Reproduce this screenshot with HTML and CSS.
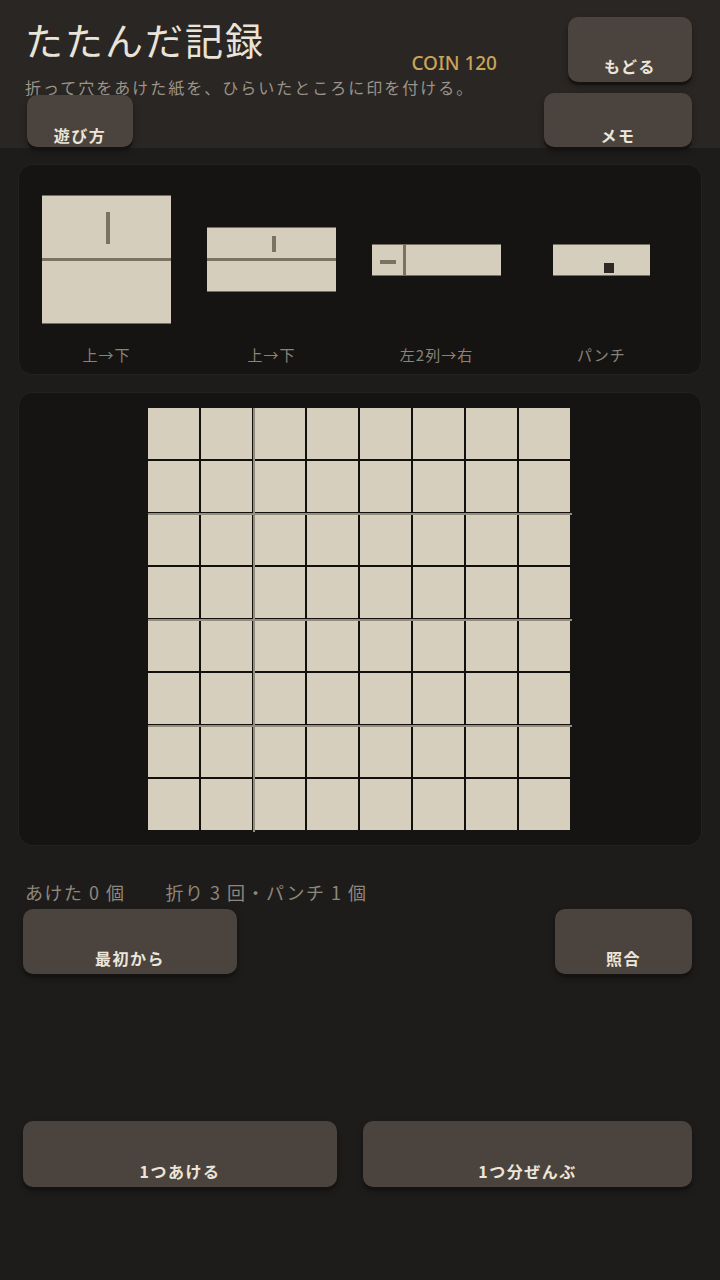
FILE: index.html
```html
<!DOCTYPE html>
<html lang="ja">
  <head>
    <meta charset="UTF-8" />
    <meta name="viewport" content="width=device-width, initial-scale=1.0" />
    <title>たたんだ記録</title>
    <link rel="stylesheet" href="styles.css">
  </head>
  <body>
    <header class="top">
      <div class="top-row">
        <div class="title-block">
          <h1>たたんだ記録</h1>
          <p class="lead">折って穴をあけた紙を、ひらいたところに印を付ける。</p>
        </div>
        <div class="coin">COIN 120</div>
        <button class="btn btn-back">もどる</button>
      </div>
      <div class="tool-row">
        <button class="btn btn-help">遊び方</button>
        <button class="btn btn-memo">メモ</button>
      </div>
    </header>

    <main class="play">
      <!-- fold steps -->
      <section class="panel steps">
        <div class="step">
          <div class="step-fig">
            <div class="paper paper-1">
              <span class="crease crease-h"></span>
              <span class="mark mark-1"></span>
            </div>
          </div>
          <div class="step-label">上→下</div>
        </div>
        <div class="step">
          <div class="step-fig">
            <div class="paper paper-2">
              <span class="crease crease-h"></span>
              <span class="mark mark-2"></span>
            </div>
          </div>
          <div class="step-label">上→下</div>
        </div>
        <div class="step">
          <div class="step-fig">
            <div class="paper paper-3">
              <span class="crease crease-v"></span>
              <span class="mark mark-3"></span>
            </div>
          </div>
          <div class="step-label">左2列→右</div>
        </div>
        <div class="step">
          <div class="step-fig">
            <div class="paper paper-4">
              <span class="hole"></span>
            </div>
          </div>
          <div class="step-label">パンチ</div>
        </div>
      </section>

      <!-- opened sheet -->
      <section class="panel board-panel">
        <div class="board">
          <div class="cell"></div><div class="cell"></div><div class="cell"></div><div class="cell"></div><div class="cell"></div><div class="cell"></div><div class="cell"></div><div class="cell"></div>
          <div class="cell"></div><div class="cell"></div><div class="cell"></div><div class="cell"></div><div class="cell"></div><div class="cell"></div><div class="cell"></div><div class="cell"></div>
          <div class="cell"></div><div class="cell"></div><div class="cell"></div><div class="cell"></div><div class="cell"></div><div class="cell"></div><div class="cell"></div><div class="cell"></div>
          <div class="cell"></div><div class="cell"></div><div class="cell"></div><div class="cell"></div><div class="cell"></div><div class="cell"></div><div class="cell"></div><div class="cell"></div>
          <div class="cell"></div><div class="cell"></div><div class="cell"></div><div class="cell"></div><div class="cell"></div><div class="cell"></div><div class="cell"></div><div class="cell"></div>
          <div class="cell"></div><div class="cell"></div><div class="cell"></div><div class="cell"></div><div class="cell"></div><div class="cell"></div><div class="cell"></div><div class="cell"></div>
          <div class="cell"></div><div class="cell"></div><div class="cell"></div><div class="cell"></div><div class="cell"></div><div class="cell"></div><div class="cell"></div><div class="cell"></div>
          <div class="cell"></div><div class="cell"></div><div class="cell"></div><div class="cell"></div><div class="cell"></div><div class="cell"></div><div class="cell"></div><div class="cell"></div>
          <span class="fold fold-v"></span>
          <span class="fold fold-h fold-h1"></span>
          <span class="fold fold-h fold-h2"></span>
          <span class="fold fold-h fold-h3"></span>
        </div>
      </section>

      <div class="status">
        <span>あけた 0 個</span>
        <span>折り 3 回・パンチ 1 個</span>
      </div>

      <div class="actions">
        <button class="btn btn-reset">最初から</button>
        <button class="btn btn-check">照合</button>
      </div>

      <div class="bottom-actions">
        <button class="btn btn-one">1つあける</button>
        <button class="btn btn-all">1つ分ぜんぶ</button>
      </div>
    </main>
  </body>
</html>
```

FILE: styles.css
```css
* {
  box-sizing: border-box;
  margin: 0;
  padding: 0;
}

body {
  background-color: #1e1c1a;
  color: #e9e3d8;
  font-family: "Noto Sans CJK JP", "Noto Sans", sans-serif;
  min-height: 1280px;
}

/* header */
.top {
  background-color: #2a2623;
  height: 148px;
  padding: 17px 28px 1px 25px;
}

.top-row {
  display: flex;
  align-items: flex-start;
}

.title-block {
  flex: 1;
  min-width: 0;
}

h1 {
  font-size: 38px;
  line-height: 44px;
  font-weight: 400;
  letter-spacing: 2px;
  color: #e9e3d8;
}

.lead {
  margin-top: 16px;
  font-size: 16px;
  line-height: 20px;
  letter-spacing: 2px;
  white-space: nowrap;
  color: #9a948a;
}

.coin {
  margin: 34px 71px 0 0;
  font-family: "Noto Sans", sans-serif;
  font-size: 19px;
  line-height: 24px;
  font-weight: 500;
  color: #c9a45a;
}

.tool-row {
  display: flex;
  justify-content: space-between;
  align-items: flex-end;
  margin-top: -4px;
  padding-left: 2px;
}

/* buttons */
.btn {
  display: flex;
  align-items: flex-end;
  justify-content: center;
  padding: 0 0 6px;
  border: none;
  border-radius: 10px;
  background-color: #4b443e;
  color: #ece6da;
  font-family: "Noto Sans CJK JP", sans-serif;
  font-size: 16px;
  line-height: 20px;
  font-weight: 700;
  letter-spacing: 1.5px;
  box-shadow: 0 3px 0 #151311, 0 4px 6px rgba(0, 0, 0, 0.35);
  cursor: pointer;
}

.tool-row .btn {
  padding-bottom: 2px;
}

.btn-back {
  width: 124px;
  height: 65px;
}

.btn-help {
  width: 106px;
  height: 52px;
}

.btn-memo {
  width: 148px;
  height: 54px;
}

.btn-reset {
  width: 214px;
  height: 65px;
}

.btn-check {
  width: 137px;
  height: 65px;
}

.btn-one {
  width: 314px;
  height: 66px;
}

.btn-all {
  width: 329px;
  height: 66px;
}

/* main area */
.play {
  padding: 17px 19px 0;
}

.panel {
  background-color: #161412;
  border-radius: 14px;
  box-shadow: 0 0 0 1px #24211e;
}

.steps {
  display: grid;
  grid-template-columns: repeat(4, 165px);
  padding: 30px 17px 7px 5px;
}

.step {
  display: flex;
  flex-direction: column;
  align-items: center;
}

.step-fig {
  height: 129px;
  display: flex;
  align-items: center;
  justify-content: center;
}

.step-label {
  margin-top: 19px;
  font-size: 15px;
  line-height: 24px;
  letter-spacing: 1px;
  color: #8a8377;
}

.paper {
  position: relative;
  background-color: #d5cebd;
  border-top: 1px solid #766e5f;
  border-bottom: 1px solid #766e5f;
}

.paper-1 {
  width: 129px;
  height: 129px;
}

.paper-2 {
  width: 129px;
  height: 65px;
}

.paper-3 {
  width: 129px;
  height: 32px;
}

.paper-4 {
  width: 97px;
  height: 32px;
}

.crease,
.mark {
  position: absolute;
  background-color: #7b7262;
}

.crease-h {
  left: 0;
  right: 0;
  height: 3px;
}

.paper-1 .crease-h {
  top: 62px;
}

.paper-2 .crease-h {
  top: 30px;
}

.crease-v {
  top: 0;
  bottom: 0;
  left: 31px;
  width: 3px;
}

.mark-1 {
  left: 64px;
  top: 16px;
  width: 4px;
  height: 32px;
}

.mark-2 {
  left: 65px;
  top: 8px;
  width: 4px;
  height: 16px;
}

.mark-3 {
  left: 8px;
  top: 15px;
  width: 16px;
  height: 4px;
}

.hole {
  position: absolute;
  left: 51px;
  top: 18px;
  width: 10px;
  height: 10px;
  background-color: #2e2925;
}

/* opened sheet */
.board-panel {
  margin-top: 19px;
  padding: 15px 2px 15px 0;
  display: flex;
  justify-content: center;
}

.board {
  position: relative;
  display: grid;
  grid-template-columns: repeat(8, 51px);
  grid-auto-rows: 51px;
  gap: 2px;
  background-color: #12100e;
}

.cell {
  background-color: #d6cfbe;
}

.fold {
  position: absolute;
  background-color: #958d7c;
}

.fold-v {
  left: 105px;
  top: 0;
  width: 2px;
  height: 424px;
}

.fold-h {
  left: 0;
  width: 424px;
  height: 2px;
}

.fold-h1 {
  top: 105px;
}

.fold-h2 {
  top: 211px;
}

.fold-h3 {
  top: 317px;
}

/* status + actions */
.status {
  display: flex;
  gap: 40px;
  margin-top: 35px;
  padding-left: 6px;
  font-size: 18px;
  line-height: 24px;
  letter-spacing: 1.5px;
  color: #8e877c;
}

.actions {
  display: flex;
  justify-content: space-between;
  margin-top: 5px;
  padding: 0 9px 0 4px;
}

.bottom-actions {
  display: flex;
  gap: 26px;
  margin-top: 147px;
  padding-left: 4px;
}
```
